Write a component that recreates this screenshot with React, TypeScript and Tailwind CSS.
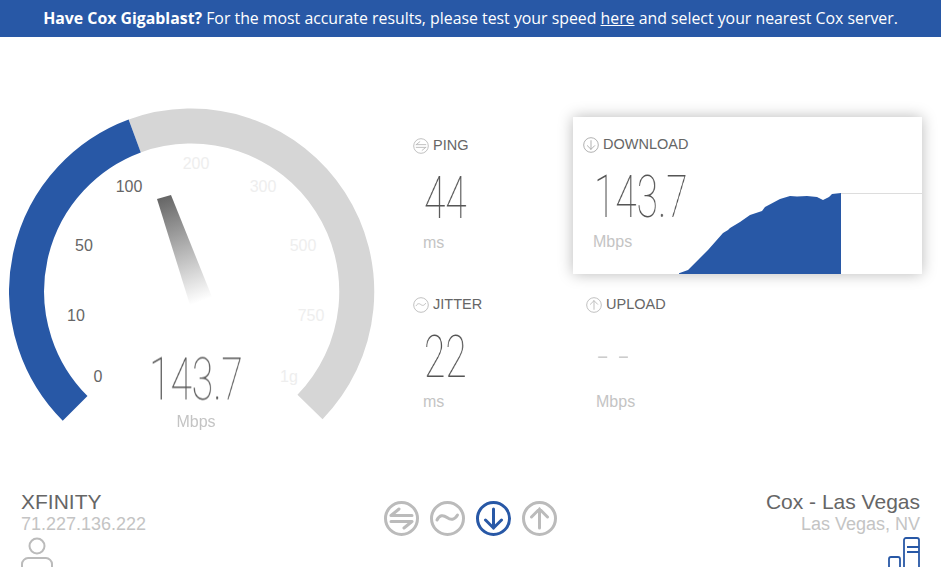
import type { ReactNode } from "react";

const BLUE = "#2858a6";

function CircleIcon({
	size = 35,
	color = "#bbbbbb",
	sw = 3,
	children,
}: {
	size?: number;
	color?: string;
	sw?: number;
	children: ReactNode;
}) {
	return (
		<svg
			width={size}
			height={size}
			viewBox="0 0 35 35"
			fill="none"
			stroke={color}
			strokeWidth={sw}
			className="shrink-0"
		>
			<circle cx="17.5" cy="17.5" r="16" />
			{children}
		</svg>
	);
}

const PingGlyph = () => (
	<path d="M7 14.5h21M7 14.5l8-6.500M28 20.500H7M28 20.500l-8 6.500" strokeLinecap="round" />
);
const JitterGlyph = () => (
	<path d="M7 19c2.500-5 6-5.500 10-2.500s7.500 2.500 10.500-2.500" strokeLinecap="round" />
);
const DownGlyph = () => <path d="M17.500 8v19M9.500 19l8 8 8-8" strokeLinecap="round" />;
const UpGlyph = () => <path d="M17.500 27V8M9.500 16l8-8 8 8" strokeLinecap="round" />;

function Stat({
	icon,
	label,
	value,
	unit,
	muted = false,
}: {
	icon: ReactNode;
	label: string;
	value: string;
	unit: string;
	muted?: boolean;
}) {
	return (
		<div className="flex flex-col">
			<div className="flex items-center gap-[4px] h-[20px] text-[14.500px] text-[#666666]">
				{icon}
				<span>{label}</span>
			</div>
			<div className="pl-[11px] mt-[18px] h-[46px] flex items-center">
				<span
					className={
						muted
							? "origin-left scale-x-[0.66] will-change-transform text-[59px] leading-none font-thin font-['Roboto',sans-serif] text-[#cccccc] whitespace-pre"
							: "origin-left scale-x-[0.66] will-change-transform text-[59px] leading-none font-thin font-['Roboto',sans-serif] text-[#555555] whitespace-nowrap"
					}
				>
					{value}
				</span>
			</div>
			<div className="pl-[10px] mt-[13px] text-[16px] leading-[20px] text-[#c4c4c4]">
				{unit}
			</div>
		</div>
	);
}

export default function App() {
	return (
		<div className="h-[573px] w-[941px] overflow-hidden bg-white font-['Liberation_Sans',sans-serif]">
			<header className="h-[37px] bg-[#2858a6] flex items-center justify-center text-white text-[15.850px] font-['Open_Sans',sans-serif]">
				<span>
					<b className="font-bold">Have Cox Gigablast?</b> For the most accurate results, please test your speed{" "}
					<u>here</u> and select your nearest Cox server.
				</span>
			</header>

			<main className="flex h-[453px]">
				<div className="relative ml-[9px] mt-[70px] w-[368px] h-[320px] shrink-0">
					<svg viewBox="9 107 368 320" className="w-full h-full" fill="none">
						<defs>
							<linearGradient
								id="needle"
								gradientUnits="userSpaceOnUse"
								x1="164"
								y1="197"
								x2="202"
								y2="301"
							>
								<stop offset="0" stopColor="#666666" />
								<stop offset="1" stopColor="#666666" stopOpacity="0" />
							</linearGradient>
						</defs>
						<path
							d="M134.700 136A165.600 165.600 0 0 1 310 407"
							stroke="#d6d6d6"
							strokeWidth="35"
						/>
						<path
							d="M75.100 408.400A165.600 165.600 0 0 1 134.700 136"
							stroke={BLUE}
							strokeWidth="35"
						/>
						<polygon points="157,199 171,195 212,297 190,305" fill="url(#needle)" />
					</svg>

					<div className="absolute inset-0 text-[16px]">
						<span className="absolute left-[89px] top-[270px] -translate-x-1/2 -translate-y-1/2 text-[#666666]">0</span>
						<span className="absolute left-[67px] top-[209px] -translate-x-1/2 -translate-y-1/2 text-[#666666]">10</span>
						<span className="absolute left-[75px] top-[139px] -translate-x-1/2 -translate-y-1/2 text-[#666666]">50</span>
						<span className="absolute left-[120px] top-[80px] -translate-x-1/2 -translate-y-1/2 text-[#666666]">100</span>
						<span className="absolute left-[187px] top-[57px] -translate-x-1/2 -translate-y-1/2 text-[#eeeeee]">200</span>
						<span className="absolute left-[254px] top-[80px] -translate-x-1/2 -translate-y-1/2 text-[#eeeeee]">300</span>
						<span className="absolute left-[294px] top-[139px] -translate-x-1/2 -translate-y-1/2 text-[#eeeeee]">500</span>
						<span className="absolute left-[302px] top-[209px] -translate-x-1/2 -translate-y-1/2 text-[#eeeeee]">750</span>
						<span className="absolute left-[280px] top-[270px] -translate-x-1/2 -translate-y-1/2 text-[#eeeeee]">1g</span>
						<span className="absolute left-[187px] top-[272px] -translate-x-1/2 -translate-y-1/2 scale-x-[0.66] will-change-transform text-[59px] leading-none font-thin font-['Roboto',sans-serif] text-[#555555]">
							143.7
						</span>
						<span className="absolute left-[187px] top-[315px] -translate-x-1/2 -translate-y-1/2 text-[16px] text-[#c4c4c4]">
							Mbps
						</span>
					</div>
				</div>

				<div className="ml-[36px] mt-[80px] grid grid-cols-[160px_349px] grid-rows-[157px_auto]">
					<div className="pt-[19px]">
						<Stat
							icon={
								<CircleIcon size={16} sw={2}>
									<PingGlyph />
								</CircleIcon>
							}
							label="PING"
							value="44"
							unit="ms"
						/>
					</div>
					<div className="relative bg-white shadow-[0_0_14px_rgba(0,0,0,0.28)] pl-[10px] pt-[18px]">
						<Stat
							icon={
								<CircleIcon size={16} sw={2} color="#aaaaaa">
									<DownGlyph />
								</CircleIcon>
							}
							label="DOWNLOAD"
							value="143.7"
							unit="Mbps"
						/>
						<svg
							viewBox="679 190 243 84"
							className="absolute right-0 bottom-0 w-[243px] h-[84px]"
						>
							<line x1="841" y1="193.500" x2="922" y2="193.500" stroke="#dddddd" />
							<polygon
								fill={BLUE}
								points="679,274 679,273.300 688,270 700,258 708,250 723,233 728,230 730,228 740,222 750,215 762,211 765,207 780,199 790,196 797,196.500 807,196 817,197 823,200 829,197 832,194 841,193 841,274"
							/>
						</svg>
					</div>
					<div className="pt-[21px]">
						<Stat
							icon={
								<CircleIcon size={16} sw={2}>
									<JitterGlyph />
								</CircleIcon>
							}
							label="JITTER"
							value="22"
							unit="ms"
						/>
					</div>
					<div className="pt-[21px] pl-[13px]">
						<Stat
							icon={
								<CircleIcon size={16} sw={2}>
									<UpGlyph />
								</CircleIcon>
							}
							label="UPLOAD"
							value="- -"
							unit="Mbps"
							muted
						/>
					</div>
				</div>
			</main>

			<footer className="flex px-[21px]">
				<div className="flex-1">
					<div className="text-[21px] leading-[24px] text-[#666666]">XFINITY</div>
					<div className="text-[18px] leading-[20px] text-[#c4c4c4]">71.227.136.222</div>
					<svg width="32" height="30" viewBox="0 0 32 30" fill="none" stroke="#bbbbbb" strokeWidth="2" className="mt-[3px]">
						<circle cx="16" cy="9" r="7.500" />
						<path d="M1 30v-3c0-3 3-6 6-6h18c3 0 6 3 6 6v3" />
					</svg>
				</div>
				<div className="flex gap-[11px] pt-[11px]">
					<CircleIcon>
						<PingGlyph />
					</CircleIcon>
					<CircleIcon>
						<JitterGlyph />
					</CircleIcon>
					<CircleIcon color={BLUE}>
						<DownGlyph />
					</CircleIcon>
					<CircleIcon>
						<UpGlyph />
					</CircleIcon>
				</div>
				<div className="flex-1 flex flex-col items-end">
					<div className="text-[21px] leading-[24px] text-[#666666]">Cox - Las Vegas</div>
					<div className="text-[18px] leading-[20px] text-[#c4c4c4]">Las Vegas, NV</div>
					<svg width="32" height="30" viewBox="0 0 32 30" fill="none" stroke={BLUE} strokeWidth="1.800" className="mt-[3px]">
						<path d="M1 30V22a2 2 0 0 1 2-2h7a2 2 0 0 1 2 2v8" />
						<path d="M16 30V3a2 2 0 0 1 2-2h11a2 2 0 0 1 2 2v27M19 10h12M19 15h12" />
					</svg>
				</div>
			</footer>
		</div>
	);
}
